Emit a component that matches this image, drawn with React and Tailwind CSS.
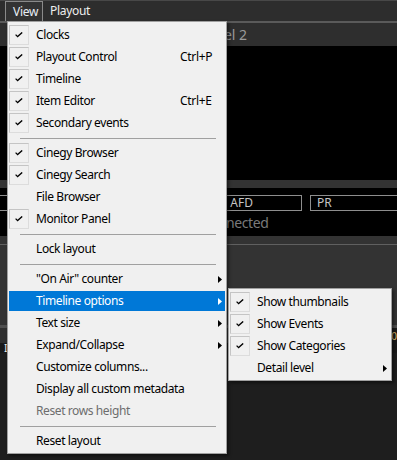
import React from "react";

const FONT = "font-['Noto_Sans','DejaVu_Sans',sans-serif]";

function Check() {
  return (
    <svg width="8" height="6" viewBox="0 0 8 6" className="block">
      <polyline points="0.6,2.6 2.6,4.6 7.2,0.4" fill="none" stroke="#000" strokeWidth="1.3" />
    </svg>
  );
}

function Arrow({ white }) {
  return (
    <svg width="4" height="7" viewBox="0 0 4 7" className="block">
      <polygon points="0,0 4,3.5 0,7" fill={white ? "#fff" : "#000"} />
    </svg>
  );
}

function CheckBox({ on }) {
  if (!on) return <div className="w-[20px] h-[20px] shrink-0" />;
  return (
    <div className="w-[20px] h-[20px] shrink-0 flex items-center justify-center border border-t-[#c4c4c4] border-l-[#c4c4c4] border-b-[#dcdcdc] border-r-[#dcdcdc] bg-[#f0f0f0]">
      <Check />
    </div>
  );
}

function Item({ label, check, shortcut, arrow, disabled, active, labelW = 144 }) {
  return (
    <div className="h-[22px] flex items-center">
      <div
        className={
          "h-[20px] w-full flex items-center " +
          (active ? "bg-[#0078d7] text-white" : disabled ? "text-[#6d6d6d]" : "text-black")
        }
      >
        <CheckBox on={check} />
        <div className="ml-[7px] whitespace-nowrap tracking-[-0.4px]" style={{ width: labelW }}>
          {label}
        </div>
        <div className="flex-1 whitespace-nowrap tracking-[-0.3px]">{shortcut}</div>
        {arrow && (
          <div className="mr-[3px]">
            <Arrow white={active} />
          </div>
        )}
      </div>
    </div>
  );
}

function Sep() {
  return (
    <div className="h-[8px] flex items-center pl-[11px] pr-[9px]">
      <div className="h-px w-full bg-[#a0a0a0]" />
    </div>
  );
}

const mainItems = [
  { label: "Clocks", check: true },
  { label: "Playout Control", check: true, shortcut: "Ctrl+P" },
  { label: "Timeline", check: true },
  { label: "Item Editor", check: true, shortcut: "Ctrl+E" },
  { label: "Secondary events", check: true },
  "sep",
  { label: "Cinegy Browser", check: true },
  { label: "Cinegy Search", check: true },
  { label: "File Browser" },
  { label: "Monitor Panel", check: true },
  "sep",
  { label: "Lock layout" },
  "sep",
  { label: "\"On Air\" counter", arrow: true },
  { label: "Timeline options", arrow: true, active: true },
  { label: "Text size", arrow: true },
  { label: "Expand/Collapse", arrow: true },
  { label: "Customize columns..." },
  { label: "Display all custom metadata" },
  { label: "Reset rows height", disabled: true },
  "sep",
  { label: "Reset layout" },
];

const subItems = [
  { label: "Show thumbnails", check: true },
  { label: "Show Events", check: true },
  { label: "Show Categories", check: true },
  { label: "Detail level", arrow: true },
];

export default function App() {
  return (
    <div className={"relative w-[397px] h-[460px] overflow-hidden bg-[#1e1e1e] text-[12px] " + FONT}>
      {/* background application */}
      <div className="flex flex-col">
        <div className="h-[21px] bg-[#2d2d2d] border-t border-[#484848] flex items-end pl-[5px] tracking-[-0.3px]">
          <div className="h-[20px] w-[38px] border border-b-0 border-[#8a8a8a] bg-[#333333] text-[#e8eef5] flex items-center pl-[7px]">
            View
          </div>
          <div className="h-[20px] flex items-center pl-[7px] text-[#eeeeee]">Playout</div>
        </div>
        <div className="h-[2px] bg-[#5a5a5a]" />
        <div className="h-[23px] bg-[#2e2e2e] flex items-end pb-[1px] pl-[199px] text-[14px] text-[#9a9a9a]">
          Panel 2
        </div>
        <div className="h-[134px] bg-black" />
        <div className="h-[8px] bg-[#333333]" />
        <div className="h-[48px] bg-black flex flex-col pt-[7px]">
          <div className="flex h-[16px] text-[12px] text-[#c4c4c4]">
            <div className="w-[302px] border border-l-0 border-[#8e8e8e] flex items-center justify-end pr-[48px] leading-none">
              AFD
            </div>
            <div className="flex-1 ml-[8px] border border-r-0 border-[#8e8e8e] flex items-center pl-[6px] leading-none">
              PR
            </div>
          </div>
          <div className="pl-[184px] text-[14px] leading-[20px] mt-[2px] text-[#7a7a7a] tracking-[-0.4px]">Disconnected</div>
        </div>
        <div className="h-[8px] bg-[#333333]" />
        <div className="h-px bg-[#606060]" />
        <div className="h-[80px] bg-[#333333]" />
        <div className="h-[3px] bg-[#4f4f4f]" />
        <div className="h-[15px] bg-[#303030] flex justify-end">
          <div className="w-[5px] h-full bg-[#1a1a1a] flex items-center justify-end text-[10px] leading-none text-[#e0c070]">
            0
          </div>
        </div>
        <div className="h-[10px] bg-[#1a1a1a] flex items-center pl-[4px] text-[#f0f0f0] text-[10px] leading-none">
          <span>I</span>
        </div>
      </div>

      {/* main View menu */}
      <div className="absolute left-[7px] top-[21px] w-[220px] bg-[#f0f0f0] border border-[#a0a0a0] px-px pt-[2px] pb-px shadow-[2px_2px_3px_rgba(0,0,0,0.45)]">
        {mainItems.map((it, i) =>
          it === "sep" ? <Sep key={i} /> : <Item key={i} {...it} />
        )}
      </div>

      {/* Timeline options submenu */}
      <div className="absolute left-[228px] top-[288px] w-[164px] bg-[#f0f0f0] border border-[#a0a0a0] px-px pt-[2px] pb-px shadow-[2px_2px_3px_rgba(0,0,0,0.45)]">
        {subItems.map((it, i) => (
          <Item key={i} {...it} labelW={120} />
        ))}
      </div>
    </div>
  );
}
